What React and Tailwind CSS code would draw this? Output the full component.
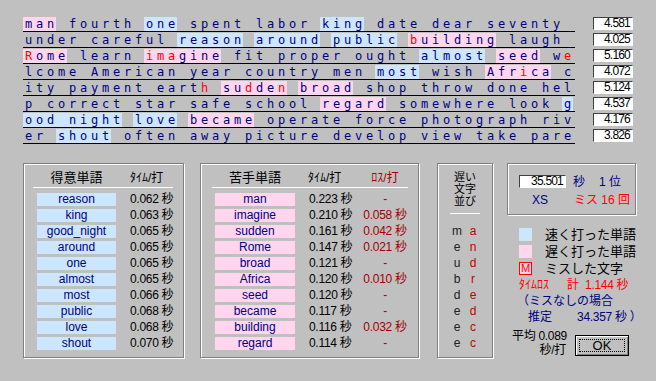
import React from 'react';

const BG = { b: 'bg-[#cce6ff]', p: 'bg-[#ffd6ee]' };

// each segment: [text, highlight, indexes of mistyped chars]
const LINES = [
  [['man', 'p'], [' fourth '], ['one', 'b'], [' spent labor '], ['king', 'b'], [' date dear seventy ']],
  [['under careful '], ['reason', 'b'], [' '], ['around', 'b'], [' '], ['public', 'b'], [' '], ['building', 'p', [0]], [' laugh ']],
  [['Rome', 'p', [0]], [' learn '], ['imagine', 'p', [0, 1, 2]], [' fit proper ought '], ['almost', 'b'], [' '], ['seed', 'p'], [' we', null, [2]]],
  [['lcome American year country men '], ['most', 'b'], [' wish '], ['Africa', 'p', [3]], [' c']],
  [['ity payment earth ', null, [16]], ['sudden', 'p', [2, 5]], [' '], ['broad', 'p'], [' shop throw done hel']],
  [['p correct star safe school '], ['regard', 'p'], [' somewhere look '], ['g', 'b']],
  [['ood night', 'b'], [' '], ['love', 'b'], [' '], ['became', 'p'], [' operate force photograph riv']],
  [['er '], ['shout', 'b'], [' often away picture develop view take pare']],
];

const TIMES = ['4.581', '4.025', '5.160', '4.072', '5.124', '4.537', '4.176', '3.826'];

const GOOD = [
  ['reason', '0.062'], ['king', '0.063'], ['good_night', '0.065'], ['around', '0.065'], ['one', '0.065'],
  ['almost', '0.065'], ['most', '0.066'], ['public', '0.068'], ['love', '0.068'], ['shout', '0.070'],
];

const BAD = [
  ['man', '0.223', null], ['imagine', '0.210', '0.058'], ['sudden', '0.161', '0.042'], ['Rome', '0.147', '0.021'],
  ['broad', '0.121', null], ['Africa', '0.120', '0.010'], ['seed', '0.120', null], ['became', '0.117', null],
  ['building', '0.116', '0.032'], ['regard', '0.114', null],
];

const SLOW = [['m', 'a'], ['e', 'n'], ['u', 'd'], ['b', 'r'], ['d', 'e'], ['e', 'd'], ['e', 'c'], ['e', 'c']];

const jp = "font-['Liberation_Sans','Noto_Sans_CJK_JP',sans-serif]";
const etched = 'border border-[#808080] shadow-[inset_1px_1px_0_#ffffff,1px_1px_0_#ffffff]';

const TextLine = ({ segs }) => (
  <div className="flex h-[14px]">
    {segs.map(([text, bg, red = []], i) => (
      <div key={i} className={`flex ${bg ? BG[bg] : ''}`}>
        {text.split('').map((c, j) => (
          <span key={j} className={`w-[11px] text-center ${red.includes(j) ? 'text-[#ff0000]' : ''}`}>
            {c === ' ' ? '\u00a0' : c}
          </span>
        ))}
      </div>
    ))}
  </div>
);

const Sunken = ({ className, children }) => (
  <div className={`shrink-0 bg-white border border-t-[#404040] border-l-[#404040] border-b-white border-r-white text-right text-black text-[12px] leading-[11px] tracking-[-0.8px] pr-[2px] ${className}`}>
    {children}
  </div>
);

export default function App() {
  return (
    <div className={`w-[656px] h-[381px] bg-[#c0c0c0] overflow-hidden whitespace-nowrap ${jp} text-[12px]`}>
      {/* ── typed text ───────────────────────── */}
      <div className="pt-[16px]">
        {LINES.map((segs, i) => (
          <div key={i} className="flex h-[16px]">
            <div className="ml-[23px] w-[552px] pt-[1px] border-b border-black text-[#000080] font-['DejaVu_Sans_Mono',monospace] text-[12px] leading-[14px]">
              <TextLine segs={segs} />
            </div>
            <Sunken className="ml-[18px] mt-[1px] w-[40px] h-[13px]">{TIMES[i]}</Sunken>
          </div>
        ))}
      </div>

      {/* ── result panels ────────────────────── */}
      <div className="flex mt-[19px] ml-[23px]">
        {/* good words */}
        <div className={`shrink-0 w-[161px] h-[195px] ${etched} pt-[6px]`}>
          <div className="flex h-[16px] items-center">
            <div className="ml-[13px] w-[79px] text-center text-[13px] text-black">得意単語</div>
            <div className="ml-[14px] text-black">ﾀｲﾑ/打</div>
          </div>
          <div className="ml-[9px] mt-[1px] w-[140px] h-px bg-white" />
          <div className="mt-[5px]">
            {GOOD.map(([w, t]) => (
              <div key={w} className="flex items-center h-[13px] mb-[3px]">
                <div className={`ml-[13px] w-[79px] h-[13px] leading-[13px] text-center text-[#000080] ${BG.b}`}>{w}</div>
                <div className="ml-[14px] text-black leading-[13px] tracking-[-0.3px]">{t} 秒</div>
              </div>
            ))}
          </div>
        </div>

        {/* bad words */}
        <div className={`shrink-0 ml-[16px] w-[219px] h-[195px] ${etched} pt-[6px]`}>
          <div className="flex h-[16px] items-center">
            <div className="ml-[14px] w-[80px] text-center text-[13px] text-black">苦手単語</div>
            <div className="ml-[13px] w-[55px] text-black">ﾀｲﾑ/打</div>
            <div className="w-[44px] text-center text-[#a00000]">ﾛｽ/打</div>
          </div>
          <div className="ml-[11px] mt-[1px] w-[196px] h-px bg-white" />
          <div className="mt-[5px]">
            {BAD.map(([w, t, l]) => (
              <div key={w} className="flex items-center h-[13px] mb-[3px]">
                <div className={`ml-[14px] w-[80px] h-[13px] leading-[13px] text-center text-[#000080] ${BG.p}`}>{w}</div>
                <div className="ml-[14px] w-[54px] text-black leading-[13px] tracking-[-0.3px]">{t} 秒</div>
                <div className="w-[44px] text-center text-[#a00000] leading-[13px] tracking-[-0.3px]">{l ? `${l} 秒` : '-'}</div>
              </div>
            ))}
          </div>
        </div>

        {/* slow characters */}
        <div className={`shrink-0 ml-[18px] w-[56px] h-[195px] ${etched} pt-[7px] flex flex-col items-center`}>
          <div className="text-[11px] text-black text-center">
            <div className="h-[12px] leading-[12px]">遅い</div>
            <div className="h-[12px] leading-[12px]">文字</div>
            <div className="h-[12px] leading-[12px]">並び</div>
          </div>
          <div className="mt-[6px] w-[30px] h-px bg-white" />
          <div className="mt-[9px]">
            {SLOW.map(([a, b], i) => (
              <div key={i} className="flex h-[16px] leading-[16px] font-['Liberation_Sans',sans-serif]">
                <span className="w-[16px] text-center text-[#202020]">{a}</span>
                <span className="w-[16px] text-center text-[#c00000]">{b}</span>
              </div>
            ))}
          </div>
        </div>

        {/* summary */}
        <div className="shrink-0 ml-[14px] w-[129px] flex flex-col">
          <div className={`h-[52px] ${etched} pt-[11px]`}>
            <div className="flex items-center h-[13px]">
              <Sunken className="ml-[11px] w-[47px] h-[13px]">35.501</Sunken>
              <span className="ml-[7px] text-[#000080]">秒</span>
              <span className="ml-[14px] text-[#000080]">1 位</span>
            </div>
            <div className="flex items-center h-[16px] mt-[4px]">
              <span className="ml-[24px] text-[#000080]">XS</span>
              <span className="ml-[26px] text-[#ff0000]">ミス 16 回</span>
            </div>
          </div>

          <div className="mt-[11px] text-[13px]">
            <div className="flex items-center h-[17px]">
              <div className={`shrink-0 ml-[12px] w-[13px] h-[13px] ${BG.b}`} />
              <span className="ml-[13px] text-black">速く打った単語</span>
            </div>
            <div className="flex items-center h-[17px]">
              <div className={`shrink-0 ml-[12px] w-[13px] h-[13px] ${BG.p}`} />
              <span className="ml-[13px] text-black">遅く打った単語</span>
            </div>
            <div className="flex items-center h-[17px]">
              <div className="shrink-0 ml-[12px] w-[13px] h-[13px] border border-[#ff0000] bg-[#ffd6ee] text-[#ff0000] text-[11px] leading-[11px] text-center">M</div>
              <span className="ml-[13px] text-black">ミスした文字</span>
            </div>
          </div>

          <div className="flex items-center h-[16px] ml-[12px] text-[#ff0000]">
            <span>ﾀｲﾑﾛｽ</span>
            <span className="ml-[18px]">計</span>
            <span className="ml-[6px] tracking-[-0.3px]">1.144 秒</span>
          </div>
          <div className="flex items-center h-[16px] ml-[10px] text-[#000080]">（ミスなしの場合</div>
          <div className="flex items-center h-[16px] ml-[21px] text-[#000080]">
            <span className="shrink-0">推定</span>
            <span className="shrink-0 ml-[25px] tracking-[-0.3px]">34.357 秒 ）</span>
          </div>

          <div className="flex mt-[4px]">
            <div className="shrink-0 ml-[5px] w-[54px] text-black leading-[14px] tracking-[-0.3px]">
              <div>平均 0.089</div>
              <div className="text-right">秒/打</div>
            </div>
            <button className="shrink-0 ml-[9px] mt-[6px] w-[54px] h-[21px] border border-black bg-[#c0c0c0] shadow-[inset_1px_1px_0_#ffffff,inset_-1px_-1px_0_#808080] p-[3px]">
              <div className="h-full border border-dotted border-black flex items-center justify-center text-[13px] text-black leading-none">
                OK
              </div>
            </button>
          </div>
        </div>
      </div>
    </div>
  );
}
